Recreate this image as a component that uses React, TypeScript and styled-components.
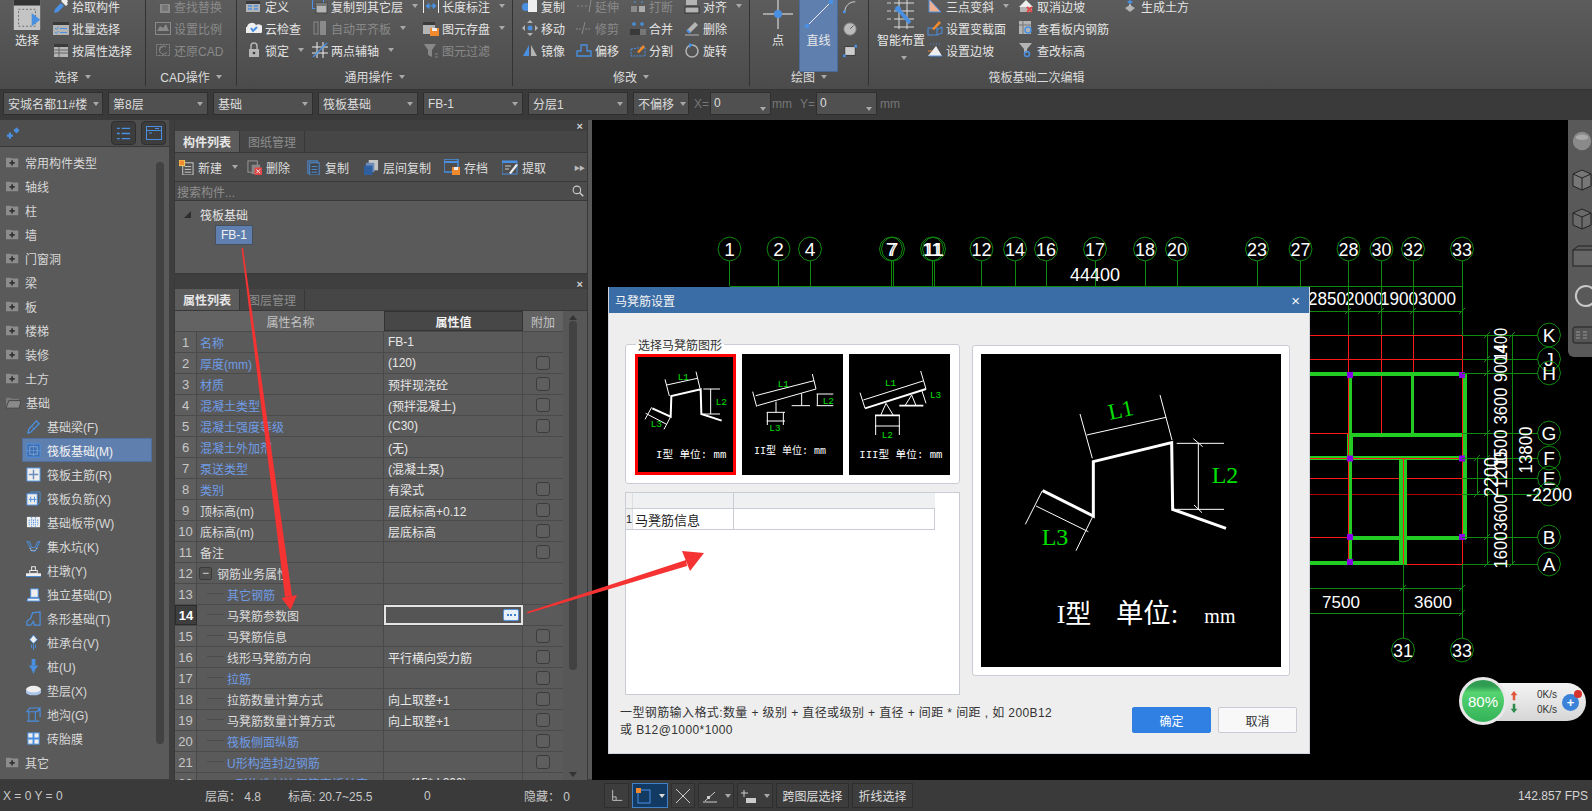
import React from "react";
import styled, { createGlobalStyle } from "styled-components";

const FONT = `"Liberation Sans", "Noto Sans CJK SC", sans-serif`;
const BLUE = "#4a90e2";

const Global = createGlobalStyle`
  html, body { margin: 0; padding: 0; background: #3a3a3a; overflow: hidden; }
  * { box-sizing: border-box; }
  #root { font: 12px ${FONT}; color: #ddd; }
`;

const Screen = styled.div`
  position: relative;
  width: 1592px;
  height: 811px;
  display: flex;
  flex-direction: column;
  overflow: hidden;
  background: #3c3c3c;
`;

/* ---------- icons ---------- */
const Glyph = styled.svg<{ $s?: number; $dim?: boolean }>`
  width: ${(p) => p.$s ?? 16}px;
  height: ${(p) => p.$s ?? 16}px;
  flex: none;
  opacity: ${(p) => (p.$dim ? 0.55 : 1)};
`;

const B = BLUE, W = "#eeeeee", G = "#b4b4b4", O = "#f08a2c", D = "#3a3a3a", R = "#e04848";

const icons: Record<string, React.ReactNode> = {
  pick: <><path d="M1 15l1-4 6-6 3 3-6 6z" fill={B} /><path d="M8 3l5 5 2-2-1-1 1-2-2-2-2 1-1-1z" fill={W} /></>,
  batch: <><rect x="0" y="2" width="16" height="13" fill={G} /><rect x="0" y="2" width="16" height="3" fill={D} /><path d="M2 8l1.500 1.500L5.500 7M2 12l1.500 1.500L5.500 11" stroke={B} fill="none" /><path d="M7 8.500h7M7 12.500h7" stroke={B} /></>,
  prop: <><rect x="1" y="2" width="14" height="13" fill={G} /><rect x="1" y="2" width="14" height="3" fill={D} /><path d="M1 8h14M1 11h14M6 5v10" stroke="#666" /></>,
  find: <><rect x="5" y="6" width="10" height="9" fill={G} /><path d="M3 2v4M1 4h4M7 8h6M7 10h6M7 12h6" stroke="#666" /></>,
  scale: <><rect x="0.500" y="2.500" width="15" height="12" fill="none" stroke={G} /><path d="M2 11l3-5 3 2 3-4 3 7z" fill={G} /></>,
  restore: <><rect x="1.500" y="2.500" width="13" height="11" fill="none" stroke={G} strokeDasharray="2 1" /><path d="M11 5a4 4 0 1 0 1 5M5 8v-3h3" stroke={G} fill="none" /></>,
  define: <><rect x="0" y="3" width="14" height="11" fill={G} /><rect x="0" y="3" width="14" height="3" fill={D} /><path d="M2 8h4M2 11h4M8 8h4M8 11h4" stroke={B} strokeWidth="1.500" /></>,
  cloud: <><path d="M1 13a3 3 0 0 1 0-6 5 5 0 0 1 9-2 4 4 0 0 1 5 8z" fill={W} /><path d="M5 8l2 3 4-4" stroke={B} strokeWidth="2" fill="none" /></>,
  lock: <><rect x="3" y="7" width="10" height="8" fill={G} /><path d="M5 7V4a3 3 0 0 1 6 0v3" stroke={G} strokeWidth="1.500" fill="none" /><circle cx="8" cy="11" r="1.300" fill={D} /></>,
  copyf: <><rect x="0.500" y="1.500" width="11" height="9" fill="none" stroke={B} /><rect x="4" y="5" width="11" height="10" fill={G} stroke="#444" /><rect x="4" y="5" width="11" height="3" fill="#777" /></>,
  alignp: <><rect x="2" y="2" width="4" height="12" fill="none" stroke={G} /><rect x="8" y="1" width="6" height="14" fill={G} /></>,
  aux: <><path d="M0 5h16M0 11h16M5 0v16M11 0v16" stroke={W} /><path d="M1 15L15 1" stroke={B} strokeWidth="1.500" /></>,
  dim: <><path d="M0.500 1v14M15.500 1v14" stroke={W} /><path d="M3 8h10M3 8l3-2.500v5zM13 8l-3-2.500v5z" fill={B} stroke={B} /></>,
  save: <><rect x="0" y="2" width="12" height="12" fill={G} /><rect x="0" y="2" width="12" height="3" fill={D} /><rect x="7" y="8" width="9" height="8" fill={O} /><rect x="9" y="8" width="5" height="3" fill={W} /></>,
  filter: <><path d="M1 2h12L9 8v7l-4-2V8z" fill={G} /><path d="M12 12h3M12 15h3" stroke={G} /></>,
  copy: <><circle cx="4" cy="9" r="4" fill={B} /><rect x="6" y="2" width="9" height="12" fill={W} /></>,
  move: <><path d="M8 0l3 3H5zM8 16l3-3H5zM0 8l3-3v6zM16 8l-3-3v6z" fill={G} /><circle cx="8" cy="8" r="2.500" fill={B} /></>,
  mirror: <><path d="M7 3v11H1z" fill={B} /><path d="M9 3v11h6z" fill={G} /></>,
  extend: <><path d="M1 8h2M5 8h2M9 8h2" stroke={G} /><path d="M15 2l-2 12" stroke={G} /></>,
  trim: <><path d="M0 9h5M9 9h6" stroke={G} strokeDasharray="2 1" /><path d="M9 2L6 14" stroke={G} /></>,
  offset: <path d="M1 14V9h4V3h6v6h4v5z" fill="none" stroke={B} strokeWidth="1.300" />,
  brk: <><rect x="1" y="8" width="6" height="6" fill={G} /><rect x="9" y="8" width="6" height="6" fill={W} /><path d="M4 4h2M11 4h2" stroke={B} strokeWidth="2" /></>,
  merge: <><rect x="0" y="9" width="16" height="6" fill={D} /><rect x="10" y="9" width="6" height="6" fill="#777" /><path d="M2 4h4M4 2v4M10 4h4M12 2v4" stroke={B} strokeWidth="1.500" /></>,
  split: <><path d="M1 7l14-2v9H1z" fill="none" stroke={B} strokeDasharray="2 1" /><path d="M7 10l6-7 2 2-6 6z" fill={O} /></>,
  align: <><rect x="2" y="2" width="11" height="5" fill={G} /><rect x="1" y="9" width="14" height="6" fill={G} stroke="#333" /></>,
  del: <><path d="M3 10l8-8 3 3-8 8z" fill={G} /><path d="M3 10l3 3" stroke={B} strokeWidth="2" /><path d="M1 15h14" stroke={G} /></>,
  rot: <><circle cx="8" cy="9" r="6" fill="none" stroke={G} strokeWidth="1.500" /><path d="M5 1l4 2-4 3z" fill={B} /></>,
  slope: <><path d="M2 1l12 13H2z" fill="#f0b090" /><path d="M2 1l12 13H2z" fill="none" stroke={B} /></>,
  section: <><rect x="1" y="8" width="9" height="7" fill="none" stroke={B} /><path d="M10 10l5-3v6l-5 2" fill="none" stroke={B} /><path d="M5 9l7-8 2 2-7 7z" fill={O} /></>,
  edge: <><path d="M1 14L9 4l6 10z" fill={W} /><path d="M2 14h13M3 2h1M6 2h1M9 2h1M12 2h1" stroke={B} /><path d="M1 9l4 0" stroke={O} /></>,
  cancel: <><path d="M1 9l7-7 7 7z" fill={W} /><rect x="2" y="9" width="12" height="5" fill={G} /><path d="M9 9l5 5M14 9l-5 5" stroke={R} strokeWidth="2" /></>,
  view: <><rect x="1" y="1" width="12" height="13" fill={G} /><path d="M1 5h12M5 1v13" stroke="#777" /><circle cx="10" cy="10" r="3" fill="none" stroke={B} strokeWidth="1.500" /></>,
  level: <><path d="M1 1h13L9 7v4H6V7z" fill={G} /><circle cx="9" cy="12" r="2.500" fill="none" stroke={B} strokeWidth="1.500" /></>,
  earth: <><path d="M5 3l3-2 3 2-3 2z" fill={B} /><path d="M3 9l5-3 5 3-5 4z" fill={G} /><path d="M8 5v2" stroke={W} /></>,
  folder: <><path d="M0 3h5l1 1h8v10H0z" fill="#8c8c8c" /><path d="M7 6v6M4 9h6" stroke="#333" strokeWidth="2" /></>,
  open: <><path d="M0 3h5l1 1h8v2H3L0 14z" fill="#7a7a7a" /><path d="M3 6h13l-2 8H0z" fill="#8a8a8a" stroke="#444" /></>,
  beam: <><path d="M2 15l1-4 8-9 3 3-9 9z" fill="none" stroke={B} strokeWidth="1.400" /><path d="M6 8l3 3" stroke={B} /></>,
  raft: <><rect x="1" y="1" width="14" height="14" fill="#3f6fb0" stroke={B} /><rect x="4" y="4" width="8" height="8" fill="none" stroke="#7da6dc" /><path d="M1 8h14M8 1v14" stroke="#7da6dc" strokeDasharray="1 1" /></>,
  rebar: <><rect x="1" y="1" width="14" height="14" fill={W} stroke={B} /><path d="M8 3v10M3 8h10" stroke="#6a8cbc" strokeWidth="1.500" /></>,
  neg: <><rect x="1" y="3" width="11" height="12" fill={W} stroke={B} /><path d="M3 3l2-2h10v11l-3 3" fill="none" stroke={B} /><path d="M5 6v6M9 6v6M3 9h8" stroke={B} /></>,
  strip: <><rect x="1" y="2" width="14" height="11" fill={W} /><path d="M6 2v11M10 2v11M3.500 5v6M8 5v6M12.500 5v6" stroke={B} strokeDasharray="1.500 1" /></>,
  pit: <><path d="M1 3l3 0 2 6h4l2-6h3M1 2l5 11h4l5-11" fill="none" stroke={B} /><path d="M5 12h6M4 10h1M11 10h1" stroke={W} strokeDasharray="1 1" /></>,
  pier: <><rect x="0" y="11" width="16" height="3" fill={W} /><rect x="4" y="8" width="8" height="3" fill="none" stroke={W} /><rect x="6" y="4" width="4" height="4" fill="none" stroke={W} /><path d="M0 14.500h16" stroke={B} /></>,
  iso: <><path d="M2 12l12 0 1 3H1z" fill={W} stroke={B} /><rect x="5" y="2" width="8" height="9" fill={W} stroke={B} /></>,
  striped: <path d="M1 15v-4l4-3 2-6 8-1v14H9l-1-4-3 4z" fill="none" stroke={B} strokeWidth="1.300" />,
  cap: <><path d="M8 0l4 5-4 4-4-4z" fill={W} stroke={B} /><path d="M6 10v4M10 10v4M8 10v6" stroke={B} /></>,
  pile: <><rect x="6" y="0" width="4" height="7" fill={B} /><path d="M3 7h10l-3 4-2 5-2-5z" fill={B} /></>,
  pad: <><ellipse cx="8" cy="7" rx="8" ry="4" fill={W} /><path d="M0 7v3c1 2 3 3 8 3s7-1 8-3V7c-1 2-3 3-8 3S1 9 0 7z" fill="#a8c4ea" /></>,
  trench: <path d="M1 5l3-4h11l-3 4zM1 5h11M3 5v9M10 5v9M1 15h13M12 5l3-3v9" fill="none" stroke={B} strokeWidth="1.200" />,
  brick: <><rect x="2" y="2" width="12" height="12" fill={W} /><path d="M8 2v12M2 8h12" stroke={B} strokeWidth="2" /><rect x="2" y="2" width="12" height="12" fill="none" stroke={B} /></>,
  newb: <><rect x="4" y="3" width="11" height="13" fill="none" stroke="#d0d0d0" /><path d="M6 7h7M6 10h7M6 13h7" stroke="#d0d0d0" /><rect x="0" y="0" width="6" height="6" fill={O} stroke="#f4d060" /></>,
  delb: <><rect x="1" y="1" width="10" height="12" fill="none" stroke="#9a9a9a" /><rect x="5" y="5" width="9" height="10" fill="#888" /><rect x="8" y="8" width="8" height="8" fill={R} /><path d="M10 10l4 4M14 10l-4 4" stroke={W} /></>,
  copyb: <><rect x="2" y="1" width="10" height="13" fill="none" stroke={B} /><rect x="4" y="3" width="10" height="13" fill="#444" stroke={B} /><path d="M6 7h6M6 10h6M6 13h6" stroke={B} /></>,
  layerb: <><rect x="5" y="0" width="10" height="11" fill="#c4c4c4" /><rect x="2" y="3" width="9" height="10" fill="#6b8cba" /><rect x="0" y="6" width="9" height="10" fill="#2f5f9e" /></>,
  saveb: <><rect x="0" y="0" width="14" height="13" fill="none" stroke={B} strokeWidth="1.500" /><path d="M0 3h14" stroke={B} strokeWidth="2" /><rect x="8" y="8" width="8" height="8" fill={O} /><rect x="10" y="8" width="4" height="3" fill={W} /></>,
  takeb: <><rect x="0" y="2" width="15" height="13" fill="none" stroke={B} /><path d="M0 3h15" stroke={B} strokeWidth="2" /><path d="M3 7h6M3 10h4" stroke="#ccc" /><path d="M7 14l7-9 2 1-7 9z" fill={W} /></>,
};

const Ic = ({ n, s, dim }: { n: string; s?: number; dim?: boolean }) => (
  <Glyph viewBox="0 0 16 16" $s={s} $dim={dim}>{icons[n]}</Glyph>
);

const Caret = styled.span<{ $c?: string }>`
  display: inline-block;
  width: 0;
  height: 0;
  margin-left: 6px;
  flex: none;
  border-left: 3.5px solid transparent;
  border-right: 3.5px solid transparent;
  border-top: 4px solid ${(p) => p.$c ?? "#a8a8a8"};
`;

/* ---------- ribbon ---------- */
const Ribbon = styled.header`
  height: 90px;
  flex: none;
  display: flex;
  overflow: hidden;
  background: linear-gradient(#5c5c5c, #4b4b4b);
  border-bottom: 1px solid #333;
`;
const Group = styled.section<{ $w: number; $plain?: boolean }>`
  width: ${(p) => p.$w}px;
  flex: none;
  height: 86px;
  display: flex;
  flex-direction: column;
  border-right: 1px solid ${(p) => (p.$plain ? "transparent" : "#333")};
`;
const GroupBody = styled.div<{ $pad?: number }>`
  height: 66px;
  margin-top: -5px;
  padding-left: ${(p) => p.$pad ?? 0}px;
  display: flex;
`;
const GroupLabel = styled.div`
  height: 25px;
  padding-top: 6px;
  display: flex;
  align-items: center;
  justify-content: center;
  color: #dcdcdc;
  white-space: nowrap;
`;
const Col = styled.div<{ $w?: number; $ml?: number }>`
  width: ${(p) => (p.$w ? `${p.$w}px` : "auto")};
  margin-left: ${(p) => p.$ml ?? 0}px;
  flex: none;
  display: flex;
  flex-direction: column;
`;
const Cmd = styled.div<{ $off?: boolean }>`
  height: 23px;
  display: flex;
  align-items: center;
  gap: 3px;
  white-space: nowrap;
  color: ${(p) => (p.$off ? "#8a8a8a" : "#e4e4e4")};
`;
const BigCmd = styled.div<{ $w: number; $ml?: number; $on?: boolean }>`
  width: ${(p) => p.$w}px;
  margin-left: ${(p) => p.$ml ?? 0}px;
  height: 77px;
  flex: none;
  display: flex;
  flex-direction: column;
  align-items: center;
  background: ${(p) => (p.$on ? "#5f7fae" : "transparent")};
  border: 1px solid ${(p) => (p.$on ? "#4a6a98" : "transparent")};
  color: #e8e8e8;
  white-space: nowrap;
`;
const BigIcon = styled.div`
  height: 36px;
  flex: none;
  display: flex;
  align-items: center;
  justify-content: center;
`;
const BigText = styled.div`
  height: 18px;
  line-height: 18px;
`;
const CornerCaret = styled.div`
  margin-top: 6px;
  line-height: 0;
`;
const MiniCol = styled.div`
  display: flex;
  flex-direction: column;
  gap: 8px;
  margin-left: 5px;
  padding-top: 5px;
`;

const Cd = ({ n, t, off, caret }: { n: string; t: string; off?: boolean; caret?: boolean }) => (
  <Cmd $off={off}>
    <Ic n={n} dim={off} />
    <span>{t}</span>
    {caret && <Caret />}
  </Cmd>
);

/* ---------- options bar ---------- */
const OptionBar = styled.div`
  height: 30px;
  flex: none;
  display: flex;
  align-items: center;
  gap: 5px;
  padding: 0 0 3px 3px;
  background: #3a3a3a;
`;
const Combo = styled.div<{ $w?: number }>`
  width: ${(p) => p.$w ?? 100}px;
  height: 23px;
  flex: none;
  display: flex;
  align-items: center;
  justify-content: space-between;
  padding: 0 4px;
  background: #505050;
  border: 1px solid #2f2f2f;
  color: #dcdcdc;
  white-space: nowrap;
  overflow: hidden;
`;
const FieldLabel = styled.span<{ $l?: number }>`
  color: #777;
  margin-left: ${(p) => p.$l ?? 0}px;
  margin-right: -4px;
  font-size: 12px;
`;
const NumField = styled.div`
  position: relative;
  width: 61px;
  height: 23px;
  flex: none;
  padding: 3px 3px;
  background: #505050;
  border: 1px solid #2f2f2f;
  color: #ddd;
  &::after {
    content: "";
    position: absolute;
    right: 4px;
    bottom: 3px;
    border-left: 3.500px solid transparent;
    border-right: 3.500px solid transparent;
    border-top: 4px solid #aaa;
  }
`;

/* ---------- main ---------- */
const Main = styled.div`
  flex: 1;
  min-height: 0;
  display: flex;
  background: #3e3e3e;
`;
const Nav = styled.nav`
  width: 169px;
  flex: none;
  display: flex;
  flex-direction: column;
  background: #5a5a5a;
  margin-bottom: 1px;
`;
const NavHead = styled.div`
  height: 27px;
  flex: none;
  display: flex;
  align-items: center;
  justify-content: space-between;
  padding: 0 3px 0 6px;
  background: #4e4e4e;
  border-bottom: 1px solid #383838;
`;
const HeadBtns = styled.div`
  display: flex;
  gap: 5px;
`;
const HeadBtn = styled.div`
  width: 25px;
  height: 24px;
  display: flex;
  align-items: center;
  justify-content: center;
  background: #3d3d3d;
  border: 1px solid #2f2f2f;
  border-radius: 4px;
`;
const NavBody = styled.div`
  position: relative;
  flex: 1;
  padding-top: 3px;
`;
const NavScroll = styled.div`
  position: absolute;
  top: 15px;
  right: 5px;
  width: 8px;
  height: 582px;
  border-radius: 4px;
  background: #424242;
`;
const NavRow = styled.div<{ $sub?: boolean; $on?: boolean }>`
  height: 24px;
  display: flex;
  align-items: center;
  gap: ${(p) => (p.$sub ? 6 : 5)}px;
  margin: ${(p) => (p.$sub ? "0 17px 0 22px" : "0 0 0 6px")};
  padding-left: ${(p) => (p.$sub ? 4 : 0)}px;
  background: ${(p) => (p.$on ? "#5f7fae" : "transparent")};
  box-shadow: ${(p) => (p.$on ? "inset 0 0 0 1px #4f6f9e" : "none")};
  color: ${(p) => (p.$on ? "#f2f2f2" : "#d8d8d8")};
  white-space: nowrap;
`;

const Mid = styled.div`
  width: 414px;
  margin-left: 5px;
  flex: none;
  display: flex;
  flex-direction: column;
  gap: 4px;
`;
const TopPanel = styled.section`
  height: 154px;
  flex: none;
  display: flex;
  flex-direction: column;
  border: 1px solid #383838;
  border-top: none;
  background: #5a5a5a;
`;
const PropPanel = styled.section`
  flex: 1;
  min-height: 0;
  display: flex;
  flex-direction: column;
  border-left: 1px solid #383838;
  border-right: 1px solid #383838;
  overflow: hidden;
  background: #5a5a5a;
`;
const PanelBar = styled.div`
  height: 11px;
  flex: none;
  display: flex;
  justify-content: flex-end;
  align-items: center;
  padding-right: 4px;
  background: #3f3f3f;
  color: #cfcfcf;
  font-size: 11px;
  font-weight: bold;
`;
const Tabs = styled.div`
  height: 22px;
  flex: none;
  display: flex;
  background: #464646;
  border-bottom: 1px solid #383838;
`;
const Tab = styled.div<{ $on?: boolean }>`
  width: 65px;
  display: flex;
  align-items: center;
  justify-content: center;
  background: ${(p) => (p.$on ? "#5c5c5c" : "transparent")};
  border-right: 1px solid #383838;
  color: ${(p) => (p.$on ? "#e6e6e6" : "#8c8c8c")};
  font-weight: ${(p) => (p.$on ? "bold" : "normal")};
`;
const ToolRow = styled.div`
  height: 29px;
  flex: none;
  display: flex;
  align-items: center;
  padding-left: 4px;
  background: #4e4e4e;
  border-bottom: 1px solid #383838;
`;
const Tool = styled.div<{ $w: number }>`
  width: ${(p) => p.$w}px;
  flex: none;
  display: flex;
  align-items: center;
  gap: 4px;
  white-space: nowrap;
  color: #dedede;
`;
const More = styled.div`
  margin-left: auto;
  padding-right: 3px;
  color: #bbb;
  font-size: 6px;
  letter-spacing: -1px;
`;
const Search = styled.div`
  height: 19px;
  flex: none;
  display: flex;
  align-items: center;
  justify-content: space-between;
  padding: 0 3px 0 2px;
  background: #4c4c4c;
  border-bottom: 1px solid #383838;
  color: #8f8f8f;
`;
const Tree = styled.div`
  flex: 1;
  padding: 3px 0 0 9px;
`;
const TreeHead = styled.div`
  height: 21px;
  display: flex;
  align-items: center;
  gap: 9px;
  color: #e2e2e2;
`;
const TreeArrow = styled.span`
  width: 0;
  height: 0;
  border-left: 7px solid transparent;
  border-bottom: 7px solid #2e2e2e;
`;
const TreeChip = styled.div`
  width: 38px;
  height: 20px;
  margin-left: 31px;
  display: flex;
  align-items: center;
  justify-content: center;
  background: #5f7fae;
  border: 1px solid #484f5c;
  color: #f0f0f0;
`;

const PropBody = styled.div`
  flex: 1;
  min-height: 0;
  display: flex;
`;
const GridWrap = styled.div`
  width: 388px;
  flex: none;
  display: flex;
  flex-direction: column;
  overflow: hidden;
`;
const HeadRow = styled.div`
  height: 21px;
  flex: none;
  display: flex;
  background: #636363;
  border-bottom: 1px solid #4a4a4a;
`;
const HeadCell = styled.div<{ $w: number; $on?: boolean }>`
  width: ${(p) => p.$w}px;
  flex: none;
  display: flex;
  align-items: center;
  justify-content: center;
  background: ${(p) => (p.$on ? "#474747" : "transparent")};
  border: ${(p) => (p.$on ? "1px solid #333" : "none")};
  font-weight: ${(p) => (p.$on ? "bold" : "normal")};
  color: ${(p) => (p.$on ? "#f0f0f0" : "#c4c4c4")};
`;
const Row = styled.div`
  height: 21px;
  flex: none;
  display: flex;
  border-bottom: 1px solid #4a4a4a;
`;
const NumCell = styled.div<{ $on?: boolean }>`
  width: 22px;
  flex: none;
  display: flex;
  align-items: center;
  justify-content: center;
  font-size: 13px;
  color: ${(p) => (p.$on ? "#fff" : "#c8c8c8")};
  font-weight: ${(p) => (p.$on ? "bold" : "normal")};
  background: ${(p) => (p.$on ? "#3e3e3e" : "#5e5e5e")};
  border: ${(p) => (p.$on ? "1px solid #2c2c2c" : "none")};
  border-right: 1px solid ${(p) => (p.$on ? "#2c2c2c" : "#4a4a4a")};
`;
const NameCell = styled.div<{ $c: string; $lvl: number }>`
  position: relative;
  width: 187px;
  flex: none;
  display: flex;
  align-items: center;
  padding-left: ${(p) => (p.$lvl === 2 ? 30 : p.$lvl === 1 ? 2 : 3)}px;
  gap: 5px;
  color: ${(p) => p.$c};
  white-space: nowrap;
  overflow: hidden;
  border-right: 1px solid #4a4a4a;
  &::before {
    content: "";
    display: ${(p) => (p.$lvl === 2 ? "block" : "none")};
    position: absolute;
    left: 10px;
    top: 9px;
    width: 17px;
    border-top: 1px solid #4c4c4c;
  }
`;
const MinusBox = styled.span`
  width: 13px;
  height: 13px;
  flex: none;
  display: flex;
  align-items: center;
  justify-content: center;
  border: 1px solid #3a3a3a;
  border-radius: 2px;
  background: #505050;
  color: #ddd;
  line-height: 1;
`;
const ValueCell = styled.div<{ $edit?: boolean }>`
  width: 139px;
  flex: none;
  display: flex;
  align-items: center;
  justify-content: ${(p) => (p.$edit ? "flex-end" : "flex-start")};
  padding: 0 ${(p) => (p.$edit ? 2 : 3)}px 0 ${(p) => (p.$edit ? 2 : 4)}px;
  color: #e8e8e8;
  white-space: nowrap;
  border: ${(p) => (p.$edit ? "2px solid #e4e4e4" : "none")};
  border-right: ${(p) => (p.$edit ? "2px solid #e4e4e4" : "1px solid #4a4a4a")};
  background: ${(p) => (p.$edit ? "#555" : "transparent")};
`;
const AddCell = styled.div`
  width: 40px;
  flex: none;
  display: flex;
  align-items: center;
  justify-content: center;
`;
const Check = styled.span`
  width: 14px;
  height: 14px;
  border: 1px solid #3c3c3c;
  border-radius: 3px;
  background: #5e5e5e;
`;
const DotsBtn = styled.span`
  width: 16px;
  height: 12px;
  display: flex;
  align-items: center;
  justify-content: center;
  gap: 1.500px;
  background: #e8f0fa;
  border: 1px solid #5b93d8;
  border-radius: 2px;
`;
const Dot = styled.i`
  width: 2px;
  height: 2px;
  background: #3f7fd0;
`;
const ScrollCol = styled.div`
  flex: 1;
  position: relative;
  background: #575757;
`;
const ScrollUp = styled.span`
  position: absolute;
  top: 4px;
  left: 6px;
  border-left: 4px solid transparent;
  border-right: 4px solid transparent;
  border-bottom: 5px solid #333;
`;
const ScrollThumb = styled.span`
  position: absolute;
  top: 10px;
  left: 6px;
  width: 8px;
  height: 349px;
  border-radius: 4px;
  background: #424242;
`;
const ScrollDown = styled.span`
  position: absolute;
  bottom: 3px;
  left: 6px;
  border-left: 4px solid transparent;
  border-right: 4px solid transparent;
  border-top: 5px solid #333;
`;
const Handle = styled.div`
  width: 4px;
  flex: none;
  margin-bottom: 1px;
  background: #585858;
`;

/* ---------- canvas ---------- */
const Canvas = styled.div`
  position: relative;
  flex: 1;
  overflow: hidden;
  background: #000;
`;
const CadSvg = styled.svg`
  display: block;
  width: 1000px;
  height: 661px;
  line {
    shape-rendering: crispEdges;
  }
  text {
    font-family: "Liberation Sans", sans-serif;
    fill: #fff;
  }
`;
const ViewTools = styled.aside`
  position: absolute;
  top: 0;
  right: 0;
  width: 24px;
  height: 237px;
  display: flex;
  flex-direction: column;
  align-items: flex-start;
  gap: 15px;
  padding: 10px 0 0 3px;
  overflow: hidden;
  background: #595959;
  border-bottom-left-radius: 6px;
`;

/* dialog */
const Dialog = styled.div`
  position: absolute;
  left: 16px;
  top: 167px;
  width: 702px;
  height: 467px;
  display: flex;
  flex-direction: column;
  background: #eeeeee;
  border: 1px solid #cfd3da;
  border-top: none;
  color: #333;
`;
const DialogTitle = styled.div`
  height: 26px;
  flex: none;
  display: flex;
  align-items: center;
  justify-content: space-between;
  padding: 0 9px 0 6px;
  background: #3a6ca5;
  color: #f4f4f4;
`;
const CloseX = styled.span`
  font-size: 15px;
  line-height: 1;
`;
const DialogBody = styled.div`
  flex: 1;
  display: flex;
  padding: 31px 0 0 16px;
  gap: 12px;
`;
const LeftPane = styled.div`
  width: 335px;
  flex: none;
  display: flex;
  flex-direction: column;
  gap: 8px;
`;
const PickBox = styled.fieldset`
  position: relative;
  height: 140px;
  flex: none;
  margin: 0;
  padding: 9px 0 0 9px;
  display: flex;
  gap: 6px;
  background: #fff;
  border: 1px solid #c9ccd3;
  border-radius: 3px;
`;
const PickLegend = styled.span`
  position: absolute;
  top: -9px;
  left: 10px;
  padding: 0 2px;
  background: linear-gradient(#eee 50%, #fff 50%);
  color: #333;
`;
const Thumb = styled.svg<{ $on?: boolean }>`
  width: 101px;
  height: 121px;
  flex: none;
  display: block;
  background: #000;
  outline: ${(p) => (p.$on ? "3px solid #ff0000" : "none")};
  outline-offset: -3px;
  text {
    font-family: "Liberation Mono", "Noto Sans CJK SC", monospace;
  }
`;
const InfoBox = styled.div`
  flex: 1;
  background: #fff;
  border: 1px solid #c9ccd3;
`;
const InfoHead = styled.div`
  height: 16px;
  display: flex;
  width: 309px;
  background: #eef0f2;
  border-bottom: 1px solid #c9ccd3;
`;
const InfoRow = styled.div`
  height: 21px;
  display: flex;
  width: 309px;
  background: #fff;
  border-bottom: 1px solid #c9ccd3;
  border-right: 1px solid #c9ccd3;
`;
const InfoIdx = styled.div`
  width: 7px;
  flex: none;
  display: flex;
  align-items: center;
  font-size: 11px;
  color: #222;
  background: #f0f0f0;
  border-right: 1px solid #dcdfe4;
`;
const InfoName = styled.div`
  width: 101px;
  flex: none;
  display: flex;
  align-items: center;
  padding-left: 2px;
  font-size: 13px;
  color: #222;
  border-right: 1px solid #c9ccd3;
`;
const PreviewBox = styled.div`
  width: 318px;
  height: 331px;
  margin-top: 1px;
  flex: none;
  padding: 8px;
  background: #fff;
  border: 1px solid #c9ccd3;
  border-radius: 3px;
`;
const PreviewSvg = styled.svg`
  display: block;
  width: 300px;
  height: 313px;
  background: #000;
  text {
    font-family: "Liberation Serif", "Noto Sans CJK SC", serif;
  }
`;
const DialogFoot = styled.div`
  height: 58px;
  flex: none;
  display: flex;
  justify-content: space-between;
  padding: 0 12px 0 11px;
`;
const Hint = styled.div`
  line-height: 17px;
  padding-top: 10px;
  color: #333;
  letter-spacing: 0.4px;
  white-space: nowrap;
`;
const Buttons = styled.div`
  display: flex;
  gap: 7px;
  padding-top: 12px;
`;
const Btn = styled.div<{ $primary?: boolean }>`
  width: 79px;
  height: 26px;
  display: flex;
  align-items: center;
  justify-content: center;
  border-radius: 2px;
  background: ${(p) => (p.$primary ? "#2f80e2" : "#f8f8f8")};
  border: 1px solid ${(p) => (p.$primary ? "#2f80e2" : "#c9ccd3")};
  color: ${(p) => (p.$primary ? "#fff" : "#333")};
`;

/* net widget */
const NetWidget = styled.div`
  position: absolute;
  left: 867px;
  top: 556px;
  width: 127px;
  height: 50px;
  display: flex;
  align-items: center;
`;
const NetPill = styled.div`
  position: absolute;
  left: 22px;
  top: 7px;
  width: 105px;
  height: 38px;
  padding: 0 7px 0 28px;
  display: flex;
  align-items: center;
  gap: 5px;
  border-radius: 0 19px 19px 0;
  background: linear-gradient(#f4f4f4, #d6d6d6);
`;
const NetBall = styled.div`
  position: relative;
  width: 48px;
  height: 48px;
  display: flex;
  align-items: center;
  justify-content: center;
  border-radius: 50%;
  border: 3px solid #e8e8e8;
  background: linear-gradient(#2f9c52 14%, #55d470 30%, #36b45a 95%);
  color: #fff;
  font-size: 15px;
`;
const NetArrows = styled.div`
  display: flex;
  flex-direction: column;
  gap: 2px;
`;
const NetRates = styled.div`
  flex: 1;
  display: flex;
  flex-direction: column;
  align-items: flex-end;
  gap: 2px;
  font-size: 10px;
  line-height: 13px;
  color: #333;
`;
const NetPlus = styled.div`
  position: relative;
  width: 17px;
  height: 17px;
  flex: none;
  display: flex;
  align-items: center;
  justify-content: center;
  border-radius: 50%;
  background: #3b82d8;
  color: #fff;
  font-weight: bold;
  font-size: 13px;
  &::after {
    content: "";
    position: absolute;
    top: -4px;
    right: -3px;
    width: 8px;
    height: 8px;
    border-radius: 50%;
    background: #d8322c;
  }
`;

/* ---------- status ---------- */
const Status = styled.footer`
  height: 31px;
  flex: none;
  display: flex;
  align-items: center;
  padding: 0 4px 0 3px;
  background: #3a3a3a;
  color: #c8c8c8;
  white-space: nowrap;
`;
const StatusCell = styled.div<{ $w: number }>`
  width: ${(p) => p.$w}px;
  flex: none;
`;
const StatusBtns = styled.div`
  display: flex;
  gap: 3px;
`;
const SBtn = styled.div<{ $w: number; $on?: boolean }>`
  width: ${(p) => p.$w}px;
  height: 25px;
  flex: none;
  display: flex;
  align-items: center;
  justify-content: center;
  gap: 1px;
  background: ${(p) => (p.$on ? "#123a62" : "#3d3d3d")};
  border: 1px solid ${(p) => (p.$on ? "#3f82c8" : "#2e2e2e")};
  color: #dedede;
  white-space: nowrap;
`;
const Fps = styled.div`
  margin-left: auto;
  color: #d4d4d4;
`;
const Overlay = styled.svg`
  position: absolute;
  left: 0;
  top: 0;
  width: 1592px;
  height: 811px;
  pointer-events: none;
`;

/* ---------- data ---------- */
const navTop = ["常用构件类型", "轴线", "柱", "墙", "门窗洞", "梁", "板", "楼梯", "装修", "土方"];
const navSub: [string, string, boolean?][] = [
  ["beam", "基础梁(F)"], ["raft", "筏板基础(M)", true], ["rebar", "筏板主筋(R)"], ["neg", "筏板负筋(X)"],
  ["strip", "基础板带(W)"], ["pit", "集水坑(K)"], ["pier", "柱墩(Y)"], ["iso", "独立基础(D)"],
  ["striped", "条形基础(T)"], ["cap", "桩承台(V)"], ["pile", "桩(U)"], ["pad", "垫层(X)"],
  ["trench", "地沟(G)"], ["brick", "砖胎膜"],
];
const LINK = "#6f9ce6", TXT = "#dcdcdc";
type P = { name: string; val?: string; blue?: boolean; cb?: boolean; lvl?: number };
const props: P[] = [
  { name: "名称", val: "FB-1", blue: true },
  { name: "厚度(mm)", val: "(120)", blue: true, cb: true },
  { name: "材质", val: "预拌现浇砼", blue: true, cb: true },
  { name: "混凝土类型", val: "(预拌混凝土)", blue: true, cb: true },
  { name: "混凝土强度等级", val: "(C30)", blue: true, cb: true },
  { name: "混凝土外加剂", val: "(无)", blue: true },
  { name: "泵送类型", val: "(混凝土泵)", blue: true },
  { name: "类别", val: "有梁式", blue: true, cb: true },
  { name: "顶标高(m)", val: "层底标高+0.12", cb: true },
  { name: "底标高(m)", val: "层底标高", cb: true },
  { name: "备注", cb: true },
  { name: "钢筋业务属性", lvl: 1 },
  { name: "其它钢筋", blue: true, lvl: 2 },
  { name: "马凳筋参数图", lvl: 2 },
  { name: "马凳筋信息", lvl: 2, cb: true },
  { name: "线形马凳筋方向", val: "平行横向受力筋", lvl: 2, cb: true },
  { name: "拉筋", blue: true, lvl: 2, cb: true },
  { name: "拉筋数量计算方式", val: "向上取整+1", lvl: 2, cb: true },
  { name: "马凳筋数量计算方式", val: "向上取整+1", lvl: 2, cb: true },
  { name: "筏板侧面纵筋", blue: true, lvl: 2, cb: true },
  { name: "U形构造封边钢筋", blue: true, lvl: 2, cb: true },
  { name: "U形构造封边钢筋弯折长度", val: "max(15*d,200)", blue: true, lvl: 2 },
];

const topAxes: [string, number][] = [
  ["1", 729.5], ["2", 778.5], ["4", 810], ["7", 891], ["7", 893], ["11", 932], ["11", 934], ["12", 981.5], ["14", 1015], ["16", 1046],
  ["17", 1095], ["18", 1145], ["20", 1177], ["23", 1257], ["27", 1300.5], ["28", 1348.5], ["30", 1381.5], ["32", 1413], ["33", 1462],
];
const rightAxes: [string, number][] = [["K", 335], ["J", 359], ["H", 373], ["G", 433], ["F", 458], ["E", 478], ["", 494], ["B", 537], ["A", 564]];
const GL = "#0f8a0f", BEAM = "#22cc22", RED = "#ff1a1a", PUR = "#8a00e6", LABEL = "#00e000";
const hexPts = (cx: number, cy: number, r = 12) =>
  Array.from({ length: 12 }, (_, i) => {
    const a = (i * Math.PI) / 6;
    return `${(cx + (r - 0.5) * Math.cos(a)).toFixed(1)},${(cy + r * Math.sin(a)).toFixed(1)}`;
  }).join(" ");

const Bubble = ({ x, y, t }: { x: number; y: number; t: string }) => (
  <g>
    <polygon points={hexPts(x, y)} fill="none" stroke={GL} />
    {t && <text x={x} y={y + 7} fontSize="19" textAnchor="middle" textLength={t.length > 1 ? 20 : undefined} lengthAdjust="spacingAndGlyphs">{t}</text>}
  </g>
);
const Seg = ({ a, b, c, d, col, w = 1 }: { a: number; b: number; c: number; d: number; col: string; w?: number }) => (
  <line x1={a} y1={b} x2={c} y2={d} stroke={col} strokeWidth={w} />
);
const Tick = ({ x, y }: { x: number; y: number }) => (
  <line x1={x - 3} y1={y + 3} x2={x + 3} y2={y - 3} stroke={GL} />
);
const Rot = ({ x, y, t, s = 19, len }: { x: number; y: number; t: string; s?: number; len?: number }) => (
  <text transform={`translate(${x} ${y}) rotate(-90)`} fontSize={s} textAnchor="middle" textLength={len} lengthAdjust="spacingAndGlyphs">{t}</text>
);

const CadDrawing = () => (
  <CadSvg viewBox="592 120 1000 661">
    <Seg a={729.5} b={286} c={1462} d={286} col={GL} />
    {topAxes.map(([t, x], i) => (
      <g key={i}>
        <Seg a={x} b={261} c={x} d={286} col={GL} />
        <Bubble x={x} y={249} t={t} />
      </g>
    ))}
    <text x={1095} y={281} fontSize="18" textAnchor="middle" textLength={50} lengthAdjust="spacingAndGlyphs">44400</text>
    <Seg a={1310} b={311} c={1462} d={311} col={GL} />
    {[["2850", 1327], ["2000", 1364], ["1900", 1399], ["3000", 1437]].map(([t, x]) => (
      <text key={t} x={x} y={305} fontSize="18" textAnchor="middle" textLength={38} lengthAdjust="spacingAndGlyphs">{t}</text>
    ))}
    {[1348, 1381, 1413, 1462].map((x) => <Seg key={x} a={x} b={286} c={x} d={335} col={GL} />)}
    {[1348, 1381, 1413, 1462].map((x) => <Tick key={x} x={x} y={311} />)}

    {/* grid */}
    {[[335, RED], [359, RED], [373, RED], [433, RED], [458, RED], [478, RED], [494, "#b00000"], [537, RED]].map(([y, c]) => (
      <Seg key={y as number} a={1310} b={y as number} c={1462} d={y as number} col={c as string} />
    ))}
    <Seg a={1404} b={564} c={1462} d={564} col={RED} />
    <Seg a={1381} b={335} c={1381} d={436} col={RED} />
    <Seg a={1413} b={335} c={1413} d={433} col={RED} />

    {/* beams */}
    <Seg a={1310} b={374} c={1465} d={374} col={BEAM} w={4} />
    <Seg a={1350} b={373} c={1350} d={433} col={BEAM} w={3} />
    <Seg a={1412} b={373} c={1412} d={433} col={BEAM} w={3} />
    <Seg a={1464} b={373} c={1464} d={539} col={BEAM} w={5} />
    <Seg a={1348} b={434.5} c={1466} d={434.5} col={BEAM} w={4} />
    <Seg a={1349.5} b={434} c={1349.5} d={458} col={BEAM} w={6} />
    <Seg a={1310} b={457.5} c={1466} d={457.5} col={BEAM} w={4} />
    <Seg a={1349.5} b={458} c={1349.5} d={564} col={BEAM} w={4} />
    <Seg a={1403} b={456} c={1403} d={565} col={BEAM} w={8} />
    <Seg a={1349} b={538} c={1466} d={538} col={BEAM} w={4} />
    <Seg a={1310} b={563} c={1406} d={563} col={BEAM} w={4} />
    {/* red over beams */}
    <Seg a={1310} b={458} c={1462} d={458} col={RED} />
    <Seg a={1348} b={335} c={1348} d={564} col={RED} />
    <Seg a={1462} b={335} c={1462} d={564} col={RED} />
    <Seg a={1403.5} b={458} c={1403.5} d={564} col={RED} />
    {[[1350, 375], [1462, 375], [1350, 458.5], [1462, 458.5], [1350, 537], [1462, 537], [1350, 562]].map(([x, y], i) => (
      <rect key={i} x={x - 3} y={y - 3} width="6" height="6" fill={PUR} />
    ))}

    {/* right axes */}
    {rightAxes.map(([t, y]) => (
      <g key={y}>
        <Seg a={1462} b={y} c={1537} d={y} col={GL} />
        <Bubble x={1549} y={y} t={t} />
        <Tick x={1487} y={y} />
      </g>
    ))}
    <Seg a={1487} b={335} c={1487} d={564} col={GL} />
    <Seg a={1512} b={335} c={1512} d={564} col={GL} />
    <Seg a={1477} b={458} c={1477} d={494} col={GL} />
    <Tick x={1477} y={458} />
    <Tick x={1477} y={494} />
    <Tick x={1512} y={335} />
    <Tick x={1512} y={564} />
    <Rot x={1507} y={550} t="1600" len={37} />
    <Rot x={1507} y={513} t="3600" len={37} />
    <Rot x={1507} y={470} t="1200" len={37} />
    <Rot x={1507} y={448} t="1500" len={37} />
    <Rot x={1507} y={406} t="3600" len={37} />
    <Rot x={1507} y={369} t="900" len={26} />
    <Rot x={1507} y={344} t="1400" len={32} />
    <Rot x={1507} y={349} t="4" len={9} />
    <Rot x={1532} y={450} t="13800" len={47} s={18} />
    <Rot x={1498} y={477} t="2200" len={40} s={20} />
    <text x={1549} y={501} fontSize="18" textAnchor="middle">-2200</text>

    {/* bottom */}
    <Seg a={1310} b={588} c={1462} d={588} col={GL} />
    <Seg a={1310} b={613} c={1462} d={613} col={GL} />
    <Seg a={1403} b={564} c={1403} d={638} col={GL} />
    <Seg a={1462} b={564} c={1462} d={638} col={GL} />
    <Tick x={1403} y={588} />
    <Tick x={1462} y={588} />
    <Tick x={1462} y={613} />
    <text x={1341} y={608} fontSize="17" textAnchor="middle">7500</text>
    <text x={1433} y={608} fontSize="17" textAnchor="middle">3600</text>
    <Bubble x={1403} y={650} t="31" />
    <Bubble x={1462} y={650} t="33" />
  </CadSvg>
);

const App = () => (
  <Screen>
    <Global />
    <Ribbon>
      <Group $w={146}>
        <GroupBody>
          <BigCmd $w={30} $ml={12}>
            <BigIcon>
              <Glyph viewBox="0 0 30 34" $s={32}>
                <rect x="1" y="0" width="28" height="34" fill="#c4c4c4" />
                <rect x="1" y="0" width="28" height="8" fill="#333" />
                <rect x="6" y="12" width="18" height="18" fill="none" stroke="#666" strokeDasharray="2 2" />
                <path d="M20 16l9 7-9 7z" fill={B} />
              </Glyph>
            </BigIcon>
            <BigText>选择</BigText>
          </BigCmd>
          <Col $w={90} $ml={11}>
            <Cd n="pick" t="拾取构件" />
            <Cd n="batch" t="批量选择" />
            <Cd n="prop" t="按属性选择" />
          </Col>
        </GroupBody>
        <GroupLabel>选择<Caret /></GroupLabel>
      </Group>
      <Group $w={91}>
        <GroupBody $pad={9}>
          <Col>
            <Cd n="find" t="查找替换" off />
            <Cd n="scale" t="设置比例" off />
            <Cd n="restore" t="还原CAD" off />
          </Col>
        </GroupBody>
        <GroupLabel>CAD操作<Caret /></GroupLabel>
      </Group>
      <Group $w={276}>
        <GroupBody $pad={9}>
          <Col $w={66}>
            <Cd n="define" t="定义" />
            <Cd n="cloud" t="云检查" />
            <Cd n="lock" t="锁定" caret />
          </Col>
          <Col $w={111}>
            <Cd n="copyf" t="复制到其它层" caret />
            <Cd n="alignp" t="自动平齐板" off caret />
            <Cd n="aux" t="两点辅轴" caret />
          </Col>
          <Col>
            <Cd n="dim" t="长度标注" caret />
            <Cd n="save" t="图元存盘" caret />
            <Cd n="filter" t="图元过滤" off />
          </Col>
        </GroupBody>
        <GroupLabel>通用操作<Caret /></GroupLabel>
      </Group>
      <Group $w={237}>
        <GroupBody $pad={9}>
          <Col $w={54}>
            <Cd n="copy" t="复制" />
            <Cd n="move" t="移动" />
            <Cd n="mirror" t="镜像" />
          </Col>
          <Col $w={54}>
            <Cd n="extend" t="延伸" off />
            <Cd n="trim" t="修剪" off />
            <Cd n="offset" t="偏移" />
          </Col>
          <Col $w={54}>
            <Cd n="brk" t="打断" off />
            <Cd n="merge" t="合并" />
            <Cd n="split" t="分割" />
          </Col>
          <Col>
            <Cd n="align" t="对齐" caret />
            <Cd n="del" t="删除" />
            <Cd n="rot" t="旋转" />
          </Col>
        </GroupBody>
        <GroupLabel>修改<Caret /></GroupLabel>
      </Group>
      <Group $w={119}>
        <GroupBody>
          <BigCmd $w={36} $ml={10}>
            <BigIcon>
              <Glyph viewBox="0 0 30 30" $s={30}>
                <path d="M0 15h30M15 0v30" stroke="#eee" />
                <circle cx="15" cy="15" r="4" fill={B} />
              </Glyph>
            </BigIcon>
            <BigText>点</BigText>
          </BigCmd>
          <BigCmd $w={39} $ml={3} $on>
            <BigIcon>
              <Glyph viewBox="0 0 30 30" $s={30}>
                <path d="M3 27L27 3" stroke="#eee" />
                <rect x="1" y="25" width="4" height="4" fill={B} />
                <rect x="25" y="1" width="4" height="4" fill={B} />
              </Glyph>
            </BigIcon>
            <BigText>直线</BigText>
          </BigCmd>
          <MiniCol>
            <Glyph viewBox="0 0 16 16" $s={14}><path d="M2 14C2 7 7 2 14 2" stroke="#ddd" fill="none" /><rect x="0" y="12" width="3" height="3" fill={B} /></Glyph>
            <Glyph viewBox="0 0 16 16" $s={14}><circle cx="8" cy="8" r="7" fill="#bbb" stroke="#888" /><path d="M8 8l4-4" stroke="#555" /></Glyph>
            <Glyph viewBox="0 0 16 16" $s={14}><rect x="2" y="3" width="12" height="10" fill="#ccc" stroke="#333" /><rect x="0" y="12" width="3" height="3" fill={B} /><rect x="13" y="1" width="3" height="3" fill={B} /></Glyph>
          </MiniCol>
        </GroupBody>
        <GroupLabel>绘图<Caret /></GroupLabel>
      </Group>
      <Group $w={336} $plain>
        <GroupBody>
          <BigCmd $w={52} $ml={6}>
            <BigIcon>
              <Glyph viewBox="0 0 30 30" $s={30}>
                <path d="M8 4h20M8 12h20M8 20h20M8 28h20M13 0v30M21 0v30" stroke="#ddd" />
                <path d="M1 4h4M1 12h4M1 20h4" stroke="#ccc" />
                <path d="M12 10l12 14" stroke={B} strokeWidth="3.500" />
                <circle cx="12" cy="10" r="3" fill={B} />
              </Glyph>
            </BigIcon>
            <BigText>智能布置</BigText>
            <CornerCaret><Caret /></CornerCaret>
          </BigCmd>
          <Col $w={91}>
            <Cd n="slope" t="三点变斜" caret />
            <Cd n="section" t="设置变截面" />
            <Cd n="edge" t="设置边坡" />
          </Col>
          <Col $w={104}>
            <Cd n="cancel" t="取消边坡" />
            <Cd n="view" t="查看板内钢筋" />
            <Cd n="level" t="查改标高" />
          </Col>
          <Col>
            <Cd n="earth" t="生成土方" />
          </Col>
        </GroupBody>
        <GroupLabel>筏板基础二次编辑</GroupLabel>
      </Group>
    </Ribbon>

    <OptionBar>
      <Combo>安城名都11#楼<Caret /></Combo>
      <Combo>第8层<Caret /></Combo>
      <Combo>基础<Caret /></Combo>
      <Combo>筏板基础<Caret /></Combo>
      <Combo>FB-1<Caret /></Combo>
      <Combo>分层1<Caret /></Combo>
      <Combo $w={56}>不偏移<Caret /></Combo>
      <FieldLabel>X=</FieldLabel>
      <NumField>0</NumField>
      <FieldLabel $l={-4}>mm</FieldLabel>
      <FieldLabel $l={7}>Y=</FieldLabel>
      <NumField>0</NumField>
      <FieldLabel $l={-2}>mm</FieldLabel>
    </OptionBar>

    <Main>
      <Nav>
        <NavHead>
          <Glyph viewBox="0 0 16 16" $s={14}><path d="M1 11h7M4.500 7.500v7M9 5h6M12 2v6" stroke={B} strokeWidth="2.500" /></Glyph>
          <HeadBtns>
            <HeadBtn>
              <Glyph viewBox="0 0 16 16" $s={15}><path d="M1 2.500h3M1 8h3M1 13.500h3M6 2.500h9M6 8h9M6 13.500h9" stroke={B} strokeWidth="1.500" /></Glyph>
            </HeadBtn>
            <HeadBtn>
              <Glyph viewBox="0 0 16 16" $s={16}><rect x="0.500" y="1.500" width="15" height="13" fill="none" stroke={B} /><path d="M1 5.500h14M9 3.500h4M3 8h3" stroke={B} /></Glyph>
            </HeadBtn>
          </HeadBtns>
        </NavHead>
        <NavBody>
          <NavScroll />
          {navTop.map((t) => (
            <NavRow key={t}><Ic n="folder" s={14} /><span>{t}</span></NavRow>
          ))}
          <NavRow><Ic n="open" s={15} /><span>基础</span></NavRow>
          {navSub.map(([n, t, on]) => (
            <NavRow key={t} $sub $on={on}><Ic n={n} s={15} /><span>{t}</span></NavRow>
          ))}
          <NavRow><Ic n="folder" s={14} /><span>其它</span></NavRow>
        </NavBody>
      </Nav>

      <Mid>
        <TopPanel>
          <PanelBar>×</PanelBar>
          <Tabs>
            <Tab $on>构件列表</Tab>
            <Tab>图纸管理</Tab>
          </Tabs>
          <ToolRow>
            <Tool $w={68}><Ic n="newb" s={15} />新建<Caret /></Tool>
            <Tool $w={59}><Ic n="delb" s={15} />删除</Tool>
            <Tool $w={58}><Ic n="copyb" s={15} />复制</Tool>
            <Tool $w={80}><Ic n="layerb" s={15} />层间复制</Tool>
            <Tool $w={58}><Ic n="saveb" s={16} />存档</Tool>
            <Tool $w={60}><Ic n="takeb" s={16} />提取</Tool>
            <More>▶▶</More>
          </ToolRow>
          <Search>
            搜索构件...
            <Glyph viewBox="0 0 16 16" $s={12}><circle cx="6.500" cy="6.500" r="5" fill="none" stroke="#ccc" strokeWidth="1.500" /><path d="M10 10l5 5" stroke="#ccc" strokeWidth="2" /></Glyph>
          </Search>
          <Tree>
            <TreeHead><TreeArrow />筏板基础</TreeHead>
            <TreeChip>FB-1</TreeChip>
          </Tree>
        </TopPanel>
        <PropPanel>
          <PanelBar>×</PanelBar>
          <Tabs>
            <Tab $on>属性列表</Tab>
            <Tab>图层管理</Tab>
          </Tabs>
          <PropBody>
            <GridWrap>
              <HeadRow>
                <HeadCell $w={22} />
                <HeadCell $w={187}>属性名称</HeadCell>
                <HeadCell $w={139} $on>属性值</HeadCell>
                <HeadCell $w={40}>附加</HeadCell>
              </HeadRow>
              {props.map((p, i) => {
                const edit = i === 13;
                return (
                  <Row key={i}>
                    <NumCell $on={edit}>{i + 1}</NumCell>
                    <NameCell $c={p.blue ? LINK : TXT} $lvl={p.lvl ?? 0}>
                      {p.lvl === 1 && <MinusBox>−</MinusBox>}
                      {p.name}
                    </NameCell>
                    <ValueCell $edit={edit}>
                      {edit ? <DotsBtn><Dot /><Dot /><Dot /></DotsBtn> : p.val}
                    </ValueCell>
                    <AddCell>{p.cb && <Check />}</AddCell>
                  </Row>
                );
              })}
            </GridWrap>
            <ScrollCol>
              <ScrollUp />
              <ScrollThumb />
              <ScrollDown />
            </ScrollCol>
          </PropBody>
        </PropPanel>
      </Mid>
      <Handle />

      <Canvas>
        <CadDrawing />
        <ViewTools>
          <Glyph viewBox="0 0 24 24" $s={22}><circle cx="12" cy="12" r="10" fill="#8a8a8a" /><ellipse cx="12" cy="8" rx="7" ry="3" fill="#aaa" /></Glyph>
          <Glyph viewBox="0 0 24 24" $s={24}><path d="M2 7l9-4 9 4v12l-9 4-9-4z" fill="#777" stroke="#222" /><path d="M2 7l9 4 9-4M11 11v12" stroke="#222" fill="none" /></Glyph>
          <Glyph viewBox="0 0 24 24" $s={24}><path d="M2 7l9-4 9 4v12l-9 4-9-4z" fill="#6a6a6a" stroke="#222" /><path d="M2 7l9 4 9-4M11 11v12" stroke="#222" fill="none" /></Glyph>
          <Glyph viewBox="0 0 24 24" $s={24}><rect x="2" y="5" width="20" height="16" fill="#666" stroke="#222" /><path d="M2 5l5-4h15v4" fill="none" stroke="#222" /></Glyph>
          <Glyph viewBox="0 0 24 24" $s={24}><path d="M22 5A10 10 0 1 0 22 19" fill="none" stroke="#c8c8c8" strokeWidth="2" /></Glyph>
          <Glyph viewBox="0 0 24 24" $s={24}><rect x="2" y="4" width="22" height="16" rx="2" fill="#555" stroke="#222" /><path d="M5 9h4M5 12h4M5 15h4M12 9h4M12 12h4M12 15h4" stroke="#999" /></Glyph>
        </ViewTools>

        <Dialog>
          <DialogTitle>马凳筋设置<CloseX>×</CloseX></DialogTitle>
          <DialogBody>
            <LeftPane>
              <PickBox>
                <PickLegend>选择马凳筋图形</PickLegend>
                <Thumb $on viewBox="75 192 303 363">
                  <path d="M127 355L182 380L184 318L272 298L274 372L335 392" stroke="#fff" strokeWidth="6" fill="none" />
                  <path d="M170 285L262 265M165 268L178 318M258 245L270 295M280 297H330M280 372H330M302 297V372M107 370L170 403M125 352L105 388M182 380L162 418" stroke="#fff" strokeWidth="3" fill="none" />
                  <text x="203" y="270" fill={LABEL} fontSize="28">L1</text>
                  <text x="317" y="345" fill={LABEL} fontSize="28">L2</text>
                  <text x="122" y="412" fill={LABEL} fontSize="28">L3</text>
                  <text x="138" y="505" fill="#fff" fontSize="32">I型 单位: mm</text>
                </Thumb>
                <Thumb viewBox="396 192 303 363">
                  <path d="M442 347L618 297M437 317L612 272M428 305L440 350M607 252L618 297M498 335V367M470 367H525M470 393H525M472 367V405M520 367V405M545 347H600M575 310V347M620 312H670M620 347H670M622 312V347" stroke="#fff" strokeWidth="3" fill="none" />
                  <text x="503" y="290" fill={LABEL} fontSize="28">L1</text>
                  <text x="638" y="342" fill={LABEL} fontSize="28">L2</text>
                  <text x="478" y="422" fill={LABEL} fontSize="28">L3</text>
                  <text x="432" y="492" fill="#fff" fontSize="30">II型 单位: mm</text>
                </Thumb>
                <Thumb viewBox="717 192 303 363">
                  <path d="M765 355L948 297" stroke="#fff" strokeWidth="6" fill="none" />
                  <path d="M760 330L942 272M750 308L765 355M932 243L948 297M828 340L812 376M828 340L850 376M795 408H870M797 376V435M868 376V435M905 315L885 347M905 315L918 347M935 300L948 340" stroke="#fff" strokeWidth="3" fill="none" />
                  <path d="M795 376H870M868 347H940" stroke="#fff" strokeWidth="5" fill="none" />
                  <text x="825" y="288" fill={LABEL} fontSize="28">L1</text>
                  <text x="815" y="443" fill={LABEL} fontSize="28">L2</text>
                  <text x="960" y="325" fill={LABEL} fontSize="28">L3</text>
                  <text x="748" y="505" fill="#fff" fontSize="32">III型 单位: mm</text>
                </Thumb>
              </PickBox>
              <InfoBox>
                <InfoHead><InfoIdx /><InfoName /></InfoHead>
                <InfoRow><InfoIdx>1</InfoIdx><InfoName>马凳筋信息</InfoName></InfoRow>
              </InfoBox>
            </LeftPane>
            <PreviewBox>
              <PreviewSvg viewBox="63 42 900 939">
                <path d="M248 452L400 528L400 365L635 308L638 508L798 565" stroke="#fff" strokeWidth="9" fill="none" />
                <path d="M380 285L618 232M360 222L397 355M600 165L636 300M650 310H792M650 508H792M715 310V508M700 296L728 320M702 495L726 518M228 498L385 575M247 452L196 553M398 530L348 632" stroke="#fff" strokeWidth="3" fill="none" />
                <text transform="translate(450 240) rotate(-12)" fill={LABEL} fontSize="68">L1</text>
                <text x="755" y="430" fill={LABEL} fontSize="72">L2</text>
                <text x="245" y="615" fill={LABEL} fontSize="72">L3</text>
                <text x="290" y="850" fill="#fff" fontSize="78">I型</text>
                <text x="468" y="850" fill="#fff" fontSize="82">单位:</text>
                <text x="733" y="850" fill="#fff" fontSize="60">mm</text>
              </PreviewSvg>
            </PreviewBox>
          </DialogBody>
          <DialogFoot>
            <Hint>
              一型钢筋输入格式:数量 + 级别 + 直径或级别 + 直径 + 间距 * 间距 , 如 200B12
              <br />
              或 B12@1000*1000
            </Hint>
            <Buttons>
              <Btn $primary>确定</Btn>
              <Btn>取消</Btn>
            </Buttons>
          </DialogFoot>
        </Dialog>

        <NetWidget>
          <NetPill>
            <NetArrows>
              <Glyph viewBox="0 0 10 12" $s={10}><path d="M5 0l4 5H6.500v6h-3V5H1z" fill="#e0553c" /></Glyph>
              <Glyph viewBox="0 0 10 12" $s={10}><path d="M5 12l4-5H6.500V1h-3v6H1z" fill="#2d8a4c" /></Glyph>
            </NetArrows>
            <NetRates><span>0K/s</span><span>0K/s</span></NetRates>
            <NetPlus>+</NetPlus>
          </NetPill>
          <NetBall>80%</NetBall>
        </NetWidget>
      </Canvas>
    </Main>

    <Status>
      <StatusCell $w={202}>X = 0 Y = 0</StatusCell>
      <StatusCell $w={83}>层高： 4.8</StatusCell>
      <StatusCell $w={136}>标高: 20.7~25.5</StatusCell>
      <StatusCell $w={100}>0</StatusCell>
      <StatusCell $w={80}>隐藏： 0</StatusCell>
      <StatusBtns>
        <SBtn $w={25}><Glyph viewBox="0 0 16 16" $s={14}><path d="M3 1v12h11M3 9h4v4" stroke="#ccc" fill="none" /></Glyph></SBtn>
        <SBtn $w={36} $on>
          <Glyph viewBox="0 0 16 16" $s={16}><rect x="2" y="2" width="12" height="13" fill="none" stroke={B} /><rect x="0" y="0" width="5" height="5" fill={O} /></Glyph>
          <Caret $c="#ddd" />
        </SBtn>
        <SBtn $w={24}><Glyph viewBox="0 0 16 16" $s={16}><path d="M1 1l14 14M15 1L1 15" stroke="#ccc" /></Glyph></SBtn>
        <SBtn $w={36}><Glyph viewBox="0 0 16 16" $s={16}><path d="M1 14h14M3 13L13 4" stroke="#ccc" /><rect x="5" y="8" width="3" height="3" fill="#ccc" /></Glyph><Caret /></SBtn>
        <SBtn $w={36}><Glyph viewBox="0 0 16 16" $s={16}><path d="M3 2v7M0 5h7" stroke="#ccc" /><rect x="5" y="10" width="10" height="5" fill="#ccc" /></Glyph><Caret /></SBtn>
        <SBtn $w={73}>跨图层选择</SBtn>
        <SBtn $w={61}>折线选择</SBtn>
      </StatusBtns>
      <Fps>142.857 FPS</Fps>
    </Status>

    <Overlay viewBox="0 0 1592 811">
      <polygon points="241.5,248 243,248 292,596 285,597" fill="#f53333" />
      <polygon points="281.5,598 297,595 290.5,610" fill="#f53333" />
      <polygon points="527,612 527.5,613.500 687,566 686,560" fill="#f53333" />
      <polygon points="682,551 704,553 690,571" fill="#f53333" />
    </Overlay>
  </Screen>
);

export default App;
